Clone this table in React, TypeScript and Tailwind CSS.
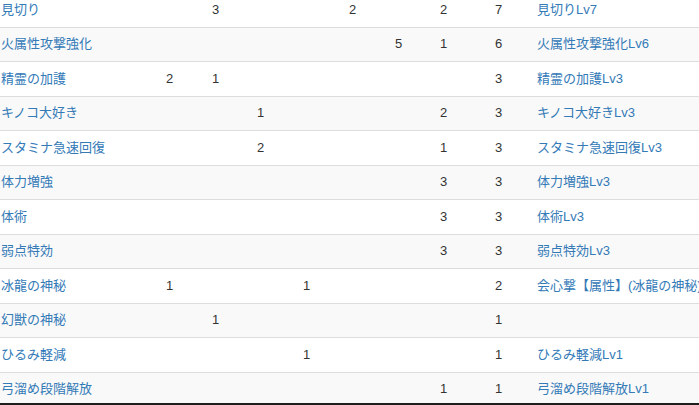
import React from 'react';

type Row = {
  name: string;
  slots: (number | null)[];
  total: number;
  result: string;
};

const rows: Row[] = [
  { name: '見切り', slots: [null, 3, null, null, 2, null, 2], total: 7, result: '見切りLv7' },
  { name: '火属性攻撃強化', slots: [null, null, null, null, null, 5, 1], total: 6, result: '火属性攻撃強化Lv6' },
  { name: '精霊の加護', slots: [2, 1, null, null, null, null, null], total: 3, result: '精霊の加護Lv3' },
  { name: 'キノコ大好き', slots: [null, null, 1, null, null, null, 2], total: 3, result: 'キノコ大好きLv3' },
  { name: 'スタミナ急速回復', slots: [null, null, 2, null, null, null, 1], total: 3, result: 'スタミナ急速回復Lv3' },
  { name: '体力増強', slots: [null, null, null, null, null, null, 3], total: 3, result: '体力増強Lv3' },
  { name: '体術', slots: [null, null, null, null, null, null, 3], total: 3, result: '体術Lv3' },
  { name: '弱点特効', slots: [null, null, null, null, null, null, 3], total: 3, result: '弱点特効Lv3' },
  { name: '冰龍の神秘', slots: [1, null, null, 1, null, null, null], total: 2, result: '会心撃【属性】(冰龍の神秘)' },
  { name: '幻獣の神秘', slots: [null, 1, null, null, null, null, null], total: 1, result: '' },
  { name: 'ひるみ軽減', slots: [null, null, null, 1, null, null, null], total: 1, result: 'ひるみ軽減Lv1' },
  { name: '弓溜め段階解放', slots: [null, null, null, null, null, null, 1], total: 1, result: '弓溜め段階解放Lv1' },
];

const font = { fontFamily: '"Liberation Sans", "Noto Sans CJK JP", Arial, sans-serif' };

export default function App() {
  return (
    <div className="w-[699px] h-[405px] flex flex-col bg-white overflow-hidden text-[13px] leading-[18.5px] text-[#333]" style={font}>
      <div className="flex-1 overflow-hidden">
        <div className="-mt-[8px]">
          {rows.map((row, i) => (
            <div
              key={row.name}
              className={`grid grid-cols-[158px_46px_45px_46px_46px_46px_45px_55px_42px_1fr] h-[34.5px] items-center border-t border-[#dddddd] ${
                i % 2 === 1 ? 'bg-[#f9f9f9]' : 'bg-white'
              }`}
            >
              <div className="pl-px text-[#337ab7] whitespace-nowrap">{row.name}</div>
              {row.slots.map((s, j) => (
                <div key={j} className="pl-2">{s ?? ''}</div>
              ))}
              <div className="pl-2">{row.total}</div>
              <div className="pl-2 text-[#337ab7] whitespace-nowrap overflow-hidden">{row.result}</div>
            </div>
          ))}
        </div>
      </div>
      <div className="h-[2px] bg-[#1e1e1e]" />
    </div>
  );
}
